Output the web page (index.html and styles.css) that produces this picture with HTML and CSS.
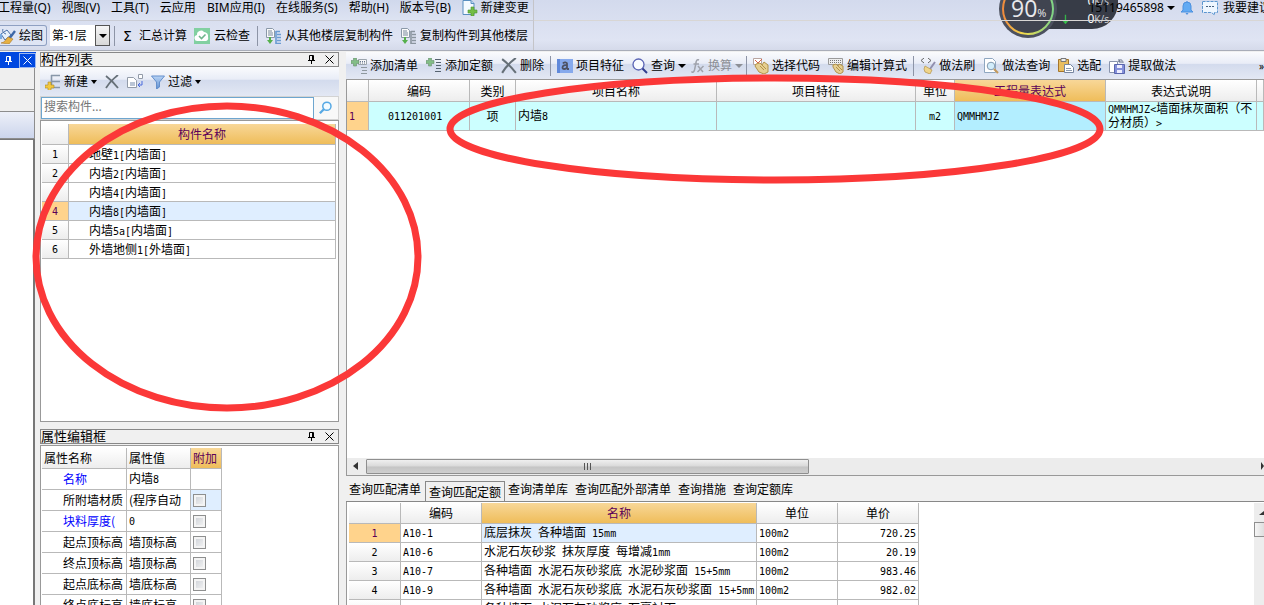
FILE: index.html
```html
<!DOCTYPE html>
<html lang="zh-CN">
<head>
<meta charset="utf-8">
<title>构件做法</title>
<link rel="stylesheet" href="styles.css">
</head>
<body>
<svg class="symbols" aria-hidden="true">
  <defs>
    <linearGradient id="steel" x1="0" y1="0" x2="0" y2="1"><stop offset="0" stop-color="#b9d4f5"/><stop offset="1" stop-color="#5f8fd0"/></linearGradient>
    <linearGradient id="ring" x1="0" y1="0" x2="1" y2="0"><stop offset="0" stop-color="#f08a3c"/><stop offset=".4" stop-color="#f3dc4e"/><stop offset="1" stop-color="#7fd486"/></linearGradient>
    <symbol id="pin" viewBox="0 0 9 9"><path d="M2.500 0.500h4v5M5.500 1v4.500M2.500 0.500v5M1 5.500h7M4.500 6v3" fill="none" stroke="currentColor"/></symbol>
    <symbol id="close" viewBox="0 0 9 9"><path d="M.5.5l8 8M8.500.5l-8 8" fill="none" stroke="currentColor"/></symbol>
    <symbol id="newdoc" viewBox="0 0 16 16"><path d="M1 .5h8l3 3v11H1z" fill="#f5faff" stroke="#5a8fc0"/><path d="M9 .5v3h3" fill="#b8d5ef" stroke="#5a8fc0"/><path d="M9 7h3v3h3v3h-3v3H9v-3H6v-3h3z" fill="#73bd45" stroke="#4c9430" stroke-width=".6"/></symbol>
    <symbol id="paint" viewBox="0 0 16 16"><path d="M1 6l6-4 4 5-6 5z" fill="#e8f1fc" stroke="#4970a8"/><path d="M3 1c-1 2 0 4 3 5" fill="none" stroke="#4970a8"/><path d="M1 6v5" stroke="#7aabe2" stroke-width="2"/><path d="M15 3l-6 8" stroke="#3d67a8" stroke-width="2.400"/><path d="M8 9l-4 5-3 1 8 1 4-5z" fill="#e6b042" stroke="#ad7928" stroke-width=".6"/></symbol>
    <symbol id="cloud" viewBox="0 0 16 16"><path d="M0 0h16v16H0z" fill="#82d0a1"/><path d="M4 13a3 3 0 0 1-1-6 4 4 0 0 1 7-3 4 4 0 0 1 4 5 3 3 0 0 1-2 4z" fill="#fff"/><path d="M5 8l2.500 2.500L11.500 6.500" fill="none" stroke="#6fb58c" stroke-width="1.600"/></symbol>
    <symbol id="floors" viewBox="0 0 16 16"><path d="M1.500.5h6l2 2v7h-8z" fill="#fafafa" stroke="#8a98a8"/><path d="M3 3h4M3 5h5M3 7h5" stroke="#79899d"/><path d="M4 9v3H2l3 4 3-4H6V9z" fill="#55b04b"/><path d="M11 3v13M11 3.500h4M12 6.500h4M12 9.500h4M12 12.500h4M11 15.500h5" stroke="currentColor" fill="none" stroke-width="1.600"/></symbol>
    <symbol id="addnode" viewBox="0 0 16 16"><path d="M6 1.500h9M6 7.500h9M6 13.500h9M6.500 1v12" stroke="#8897a9" stroke-width="1.600" fill="none"/><path d="M3 8h3v3h3v3H6v3H3v-3H0v-3h3z" fill="#f2c840" stroke="#a88727" stroke-width=".6"/></symbol>
    <symbol id="cross" viewBox="0 0 14 14"><path d="M1 1c4 3 8 7 12 12M13 0C9 3 4 8 1 13" fill="none" stroke="#667078" stroke-width="1.800"/></symbol>
    <symbol id="copy" viewBox="0 0 16 16"><path d="M.5 3.500h6l3 3v7h-9z" fill="#fff" stroke="#929ba8"/><path d="M3 8h5v4H3z" fill="#bac5d5"/><path d="M11.500.5h4v4h-4z" fill="#fff" stroke="#929ba8"/><path d="M15 7v4h-4m2-2-2 2 2 2" fill="none" stroke="#4a6bdd"/></symbol>
    <symbol id="funnel" viewBox="0 0 14 14"><path d="M.5 1h13L8.500 7v5L5.500 14V7z" fill="url(#steel)" stroke="#648fcc"/></symbol>
    <symbol id="lens" viewBox="0 0 16 16"><circle cx="9" cy="6" r="4.700" fill="#f3fbff" stroke="currentColor" stroke-width="1.700"/><path d="M5.500 9.500L1 14" stroke="currentColor" stroke-width="2.600"/></symbol>
    <symbol id="lensr" viewBox="0 0 16 16"><circle cx="6.500" cy="6.500" r="5.500" fill="#fafcff" stroke="#5a64b4" stroke-width="1.300"/><path d="M10.500 10.500L15 15" stroke="#303c8e" stroke-width="2"/></symbol>
    <symbol id="addlist" viewBox="0 0 16 16"><path d="M7.500 1.500h8v5h-8z" fill="#f7f7f7" stroke="#9ba4ad"/><path d="M9 3.500h5M9 5h5" stroke="#67778e" stroke-dasharray="1 1"/><path d="M10 9.500h6M11 12.500h5M10 15.500h6" stroke="#8e989e"/><path d="M2.500 0h3v2.500H8v3H5.500V8h-3V5.500H0v-3h2.500z" fill="#82bd86" stroke="#6a8e70" stroke-width=".6"/></symbol>
    <symbol id="addquota" viewBox="0 0 16 16"><path d="M9 1.500h6M10 4.500h5M10 7.500h5M10 10.500h5M9 13.500h6" stroke="#56636f" stroke-width="1.200"/><path d="M2.500 0h3v2.500H8v3H5.500V8h-3V5.500H0v-3h2.500z" fill="#82bd86" stroke="#6a8e70" stroke-width=".6"/></symbol>
    <symbol id="feature" viewBox="0 0 16 14"><path d="M0 0h16v14H0z" fill="#86a9ec"/><path d="M0 0h3v14H0z" fill="#5f88da"/><path d="M6 4.500c1-2 4-1 4 0v5.500M10 6.500c-2-1-4.500 0-4.500 2S9 10.500 10 8.500M10 10h2" fill="none" stroke="#4d5263" stroke-width="1.800"/></symbol>
    <symbol id="fx" viewBox="0 0 14 14"><path d="M8 1C6 0 5 2 5 4L3.500 11c-.5 2-2 3-3 1.500M2.500 5H8M7 7l5 6M12.500 7L6.500 13" fill="none" stroke="#a0a3ac" stroke-width="1.500"/></symbol>
    <symbol id="handcode" viewBox="0 0 16 16"><path d="M.5.5h8v6h-8z" fill="#fff" stroke="#b9a5a0"/><path d="M2 2l3 3 4-4" fill="none" stroke="#d96347"/><path d="M3 6l4-1 2 2 2-3 4 3v7l-4 2-5-2-4-6z" fill="#e5cf92" stroke="#b39349"/><path d="M7 8l4 4M9 7l4 4" stroke="#b39349"/></symbol>
    <symbol id="handcalc" viewBox="0 0 16 16"><path d="M.5.5h14v6H.5z" fill="#eee" stroke="#9a9a9a"/><path d="M2 2.500h11M2 4.500h11" stroke="#777" stroke-dasharray="1 1"/><path d="M5 7l3-1 2 2 1-2 4 2v6l-3 2-4-2-3-5z" fill="#e5cf92" stroke="#b39349"/><path d="M8 9l4 4M10 8l4 4" stroke="#b39349"/></symbol>
    <symbol id="brush" viewBox="0 0 16 16"><path d="M4 0L1 2.500 4 5M8 0l3 2.500L8 5" fill="none" stroke="#666"/><path d="M15 4l-5 7" stroke="#918fae" stroke-width="2"/><path d="M5 8l7 4-2 4-5-2-1-3z" fill="#f0d58a" stroke="#b89a55" stroke-width=".8"/></symbol>
    <symbol id="doclens" viewBox="0 0 16 16"><path d="M1.500.5h8l3 3v11h-11z" fill="#fff" stroke="#8fa7c0"/><circle cx="8" cy="8" r="3.800" fill="#d2edfb" stroke="#8399ae"/><path d="M11 11l4 4" stroke="#c3995d" stroke-width="2.200"/></symbol>
    <symbol id="paste" viewBox="0 0 16 16"><path d="M.5 1.500h10v12H.5z" fill="#e8bd60" stroke="#a6762b"/><path d="M3 .5h5v3H3z" fill="#eee" stroke="#777"/><path d="M6.500 6.500h6l3 3v5h-9z" fill="#fff" stroke="#7786a0"/><path d="M8 10.500h5M8 12.500h6" stroke="#8b9ab0"/></symbol>
    <symbol id="extract" viewBox="0 0 16 16"><path d="M.5 3.500h8v11h-8z" fill="#fff" stroke="#8994ad"/><path d="M5.500 6.500h10v9h-10z" fill="#8490da" stroke="#5965ad"/><path d="M8 7h5v3H8zM8 12h5v3H8z" fill="#eef"/><path d="M14 5c0-4-4-4-4-1m0-3v3h3" fill="none" stroke="#626d88"/></symbol>
    <symbol id="bell" viewBox="0 0 14 14"><path d="M7 0v2M3 9V5a4 4 0 0 1 8 0v4l2 2H1z" fill="#61aaf3" stroke="#4d91df"/><path d="M5.500 12h3L7 14z" fill="#4d91df"/></symbol>
    <symbol id="chat" viewBox="0 0 16 14"><path d="M.5.5h15v11h-3v2.500l-3-2.500h-9z" fill="#eef6ff" stroke="#5b95cf" stroke-dasharray="3 1"/><path d="M4 5.500h2M7 5.500h2M10 5.500h2" stroke="#47607e"/></symbol>
  </defs>
</svg>

<header class="top">
  <nav class="menu" aria-label="主菜单">
    <button>工程量(Q)</button><button>视图(V)</button><button>工具(T)</button><button>云应用</button><button>BIM应用(I)</button><button>在线服务(S)</button><button>帮助(H)</button><button>版本号(B)</button>
    <button class="with-icon"><svg class="i16"><use href="#newdoc"/></svg>新建变更</button>
  </nav>
  <div class="account">
    <button class="with-icon">15119465898<i class="tri"></i></button>
    <svg class="i14"><use href="#bell"/></svg>
    <button class="with-icon"><svg class="i16"><use href="#chat"/></svg>我要建议</button>
  </div>
  <div class="tools">
    <button class="draw"><svg class="i16"><use href="#paint"/></svg>绘图</button>
    <label class="floor"><select aria-label="楼层"><option>第-1层</option></select></label>
    <i class="sep"></i>
    <button class="sum"><span class="sigma">Σ</span>汇总计算</button>
    <button><svg class="i16"><use href="#cloud"/></svg>云检查</button>
    <i class="sep"></i>
    <button><svg class="i16 blue"><use href="#floors"/></svg>从其他楼层复制构件</button>
    <button><svg class="i16 gray"><use href="#floors"/></svg>复制构件到其他楼层</button>
  </div>
</header>

<main class="work">
  <aside class="dock">
    <div class="dock-title"><svg class="i9"><use href="#pin"/></svg><button aria-label="关闭"><svg class="i9"><use href="#close"/></svg></button></div>
    <div class="slot"></div><div class="slot"></div><div class="slot active"></div><div class="dock-body"></div>
  </aside>

  <section class="side">
    <div class="caption"><h2>构件列表</h2><svg class="i9"><use href="#pin"/></svg><button aria-label="关闭"><svg class="i9"><use href="#close"/></svg></button></div>
    <div class="bar side-bar">
      <button><svg class="i16"><use href="#addnode"/></svg>新建<i class="tri small"></i></button>
      <button aria-label="删除"><svg class="i14"><use href="#cross"/></svg></button>
      <button aria-label="复制"><svg class="i16"><use href="#copy"/></svg></button>
      <button><svg class="i14"><use href="#funnel"/></svg>过滤<i class="tri small"></i></button>
    </div>
    <div class="search"><input type="text" aria-label="搜索构件" placeholder="搜索构件..."><button aria-label="搜索"><svg class="i14 sky"><use href="#lens"/></svg></button></div>
    <div class="box list">
      <table class="grid names">
        <colgroup><col class="w27"><col></colgroup>
        <thead><tr><th></th><th class="hot">构件名称</th></tr></thead>
        <tbody>
          <tr><th><b>1</b></th><td>地壁<b>1[</b>内墙面<b>]</b></td></tr>
          <tr><th><b>2</b></th><td>内墙<b>2[</b>内墙面<b>]</b></td></tr>
          <tr><th></th><td>内墙<b>4[</b>内墙面<b>]</b></td></tr>
          <tr class="current"><th><b>4</b></th><td class="sel">内墙<b>8[</b>内墙面<b>]</b></td></tr>
          <tr><th><b>5</b></th><td>内墙<b>5a[</b>内墙面<b>]</b></td></tr>
          <tr><th><b>6</b></th><td>外墙地侧<b>1[</b>外墙面<b>]</b></td></tr>
        </tbody>
      </table>
    </div>
    <div class="caption second"><h2>属性编辑框</h2><svg class="i9"><use href="#pin"/></svg><button aria-label="关闭"><svg class="i9"><use href="#close"/></svg></button></div>
    <div class="box props-box">
      <table class="grid props">
        <colgroup><col class="w85"><col class="w64"><col class="w31"></colgroup>
        <thead><tr><th>属性名称</th><th>属性值</th><th class="hot">附加</th></tr></thead>
        <tbody>
          <tr><td class="key">名称</td><td>内墙<b>8</b></td><td></td></tr>
          <tr><td>所附墙材质</td><td>(程序自动</td><td class="sel"><input type="checkbox" aria-label="附加 所附墙材质"></td></tr>
          <tr><td class="key">块料厚度(</td><td><b>0</b></td><td><input type="checkbox" aria-label="附加 块料厚度"></td></tr>
          <tr><td>起点顶标高</td><td>墙顶标高</td><td><input type="checkbox" aria-label="附加 起点顶标高"></td></tr>
          <tr><td>终点顶标高</td><td>墙顶标高</td><td><input type="checkbox" aria-label="附加 终点顶标高"></td></tr>
          <tr><td>起点底标高</td><td>墙底标高</td><td><input type="checkbox" aria-label="附加 起点底标高"></td></tr>
          <tr><td>终点底标高</td><td>墙底标高</td><td><input type="checkbox" aria-label="附加 终点底标高"></td></tr>
        </tbody>
      </table>
    </div>
  </section>

  <section class="content">
    <div class="bar main-bar">
      <button><svg class="i16"><use href="#addlist"/></svg>添加清单</button>
      <button><svg class="i16"><use href="#addquota"/></svg>添加定额</button>
      <button><svg class="i16"><use href="#cross"/></svg>删除</button>
      <i class="sep"></i>
      <button><svg class="i16"><use href="#feature"/></svg>项目特征</button>
      <button class="drop"><svg class="i16"><use href="#lensr"/></svg>查询<i class="tri"></i></button>
      <button class="drop off" disabled><svg class="i14"><use href="#fx"/></svg>换算<i class="tri"></i></button>
      <i class="sep"></i>
      <button><svg class="i16"><use href="#handcode"/></svg>选择代码</button>
      <button><svg class="i16"><use href="#handcalc"/></svg>编辑计算式</button>
      <i class="sep"></i>
      <button><svg class="i16"><use href="#brush"/></svg>做法刷</button>
      <button><svg class="i16"><use href="#doclens"/></svg>做法查询</button>
      <button><svg class="i16"><use href="#paste"/></svg>选配</button>
      <button><svg class="i16"><use href="#extract"/></svg>提取做法</button>
      <span class="more">»</span>
    </div>
    <div class="upper">
      <table class="grid items">
        <colgroup><col class="w22"><col class="w101"><col class="w46"><col class="w201"><col class="w199"><col class="w39"><col class="w151"><col class="w151"><col></colgroup>
        <thead><tr><th></th><th>编码</th><th>类别</th><th>项目名称</th><th>项目特征</th><th>单位</th><th class="hot">工程量表达式</th><th>表达式说明</th><th></th></tr></thead>
        <tbody><tr class="current"><th><b>1</b></th><td class="code"><b>011201001</b></td><td class="mid">项</td><td>内墙<b>8</b></td><td></td><td class="mid"><b>m2</b></td><td class="cell"><b>QMMHMJZ</b></td><td class="wrap"><b>QMMHMJZ&lt;</b>墙面抹灰面积（不分材质）<b>&gt;</b></td><td></td></tr></tbody>
      </table>
      <div class="hscroll"><i class="arrow"></i><div class="thumb"><i></i><i></i><i></i></div><i class="arrow right"></i></div>
    </div>
    <div class="tabs" role="tablist">
      <button role="tab">查询匹配清单</button><button role="tab" class="on" aria-selected="true">查询匹配定额</button><button role="tab">查询清单库</button><button role="tab">查询匹配外部清单</button><button role="tab">查询措施</button><button role="tab">查询定额库</button>
    </div>
    <div class="lower">
      <table class="grid quota">
        <colgroup><col class="w52"><col class="w81"><col class="w275"><col class="w81"><col class="w81"></colgroup>
        <thead><tr><th></th><th>编码</th><th class="hot">名称</th><th>单位</th><th>单价</th></tr></thead>
        <tbody>
          <tr class="current"><th><b>1</b></th><td><b>A10-1</b></td><td class="sel">底层抹灰<b> </b>各种墙面<b> 15mm</b></td><td><b>100m2</b></td><td class="num"><b>720.25</b></td></tr>
          <tr><th><b>2</b></th><td><b>A10-6</b></td><td>水泥石灰砂浆<b> </b>抹灰厚度<b> </b>每增减<b>1mm</b></td><td><b>100m2</b></td><td class="num"><b>20.19</b></td></tr>
          <tr><th><b>3</b></th><td><b>A10-7</b></td><td>各种墙面<b> </b>水泥石灰砂浆底<b> </b>水泥砂浆面<b> 15+5mm</b></td><td><b>100m2</b></td><td class="num"><b>983.46</b></td></tr>
          <tr><th><b>4</b></th><td><b>A10-9</b></td><td>各种墙面<b> </b>水泥石灰砂浆底<b> </b>水泥石灰砂浆面<b> 15+5mm</b></td><td><b>100m2</b></td><td class="num"><b>982.02</b></td></tr>
          <tr><th></th><td></td><td>各种墙面<b> </b>水泥石灰砂浆底<b> </b>石膏衬面</td><td></td><td></td></tr>
        </tbody>
      </table>
      <div class="vscroll"><i class="arrow up"></i><div class="knob"></div></div>
    </div>
  </section>
</main>

<div class="meter">
  <div class="pill"><span class="rate"><em>0</em>K/s</span><span class="rate"><i>↓</i><em>0</em>K/s</span></div>
  <svg class="dial" viewBox="0 0 60 60"><circle cx="30" cy="30" r="29" fill="#4c515f"/><circle cx="30" cy="30" r="25" fill="#404450" stroke="url(#ring)" stroke-width="2"/></svg>
  <p class="percent">90<small>%</small></p>
</div>
<svg class="marks" aria-hidden="true"><ellipse cx="227" cy="257" rx="191" ry="151"/><ellipse cx="775" cy="129" rx="325" ry="51"/></svg>
</body>
</html>
```

FILE: styles.css
```css
* { box-sizing: border-box; }
body {
  margin: 0;
  height: 100vh;
  display: flex;
  flex-direction: column;
  overflow: hidden;
  background: #f0f0f0;
  color: #000;
  font: 12px/16px "Noto Sans", "Noto Sans CJK SC", sans-serif;
}
button {
  display: flex;
  align-items: center;
  gap: 3px;
  margin: 0;
  padding: 0;
  border: 0;
  background: none;
  color: inherit;
  font: inherit;
  white-space: nowrap;
}
svg { display: block; flex: none; }
i { font-style: normal; }
.symbols { position: absolute; width: 0; height: 0; }
.i16 { width: 16px; height: 16px; }
.i14 { width: 14px; height: 14px; }
.i9 { width: 9px; height: 9px; }
.blue { color: #6a9bd2; }
.gray { color: #8a949e; }
.sky { color: #55a8e4; }
.tri {
  border: 4px solid transparent;
  border-top-color: currentColor;
  border-bottom: 0;
}
.tri.small { border-width: 4px 3px 0; }
.sep { width: 1px; height: 20px; background: #8d94a6; }

/* window header */
.top {
  flex: none;
  height: 51px;
  display: grid;
  grid-template: 21px 29px / auto 1fr;
  background: linear-gradient(#d3daed, #dfe4f3 80%, #d5daea);
  border-bottom: 1px solid #a9adb8;
}
.menu {
  display: flex;
  gap: 11px;
  padding: 0 4px 5px 0;
  margin-left: -2px;
  border-right: 1px solid #c4c4c8;
  border-bottom: 1px solid #c9cbd4;
  background: linear-gradient(#d0d8ec, #dde3f2);
}
.account {
  position: relative;
  z-index: 1;
  display: flex;
  justify-content: flex-end;
  align-items: center;
  gap: 5px;
  margin-right: -7px;
  padding-bottom: 5px;
  border-bottom: 1px solid #d8d6d4;
}
.account .with-icon:last-child { gap: 5px; margin-left: 3px; }
.tools {
  grid-row: 2;
  display: flex;
  align-items: center;
  gap: 7px;
  padding-right: 5px;
  border-right: 1px solid #c4c4c8;
}
.tools button { gap: 4px; }
.tools .draw {
  gap: 3px;
  height: 21px;
  margin-right: -4px;
  padding-right: 3px;
  border: 1px solid #8fa0c2;
  border-left: 0;
  border-radius: 0 3px 3px 0;
  background: #dfe5f4;
}
.floor {
  position: relative;
  width: 60px;
  height: 21px;
  margin-right: -3px;
  background: #fff;
}
.floor select {
  width: 100%;
  height: 100%;
  padding: 0 2px;
  border: 0;
  appearance: none;
  background: none;
  font: inherit;
}
.floor::before {
  content: "";
  position: absolute;
  inset: 0 0 0 auto;
  width: 13px;
  border: 1px solid #555;
  background: linear-gradient(#f6f6f6, #d8d8d8);
}
.floor::after {
  content: "";
  position: absolute;
  right: 3px;
  top: 9px;
  border: 4px solid transparent;
  border-top-color: #000;
  border-width: 4px 4px 0;
}
.tools .sum { gap: 7px; padding-left: 1px; }
.sigma { font: 14px/16px "DejaVu Sans", sans-serif; }

/* work area */
.work {
  flex: 1;
  min-height: 0;
  display: grid;
  grid-template-columns: 36px 299px minmax(0, 1fr);
  column-gap: 4px;
  padding-top: 1px;
}
.dock { display: flex; flex-direction: column; }
.dock-title {
  display: flex;
  align-items: center;
  justify-content: flex-end;
  gap: 6px;
  height: 16px;
  background: #0048e0;
  color: #fff;
}
.dock-title button { padding: 2px 3px; border: 1px solid #9db8ef; }
.slot { height: 22px; margin-right: 1px; border: 1px solid #8d8d8d; border-width: 0 1px 1px 0; background: #efefef; }
.slot.active { height: 27px; background: linear-gradient(#edf0f9, #ccd5ec); }
.dock-body { flex: 1; margin-right: 1px; border: 1px solid #777; border-width: 1px 2px 0 0; background: #fff; }

.side { display: flex; flex-direction: column; min-height: 0; }
.caption {
  flex: none;
  display: flex;
  align-items: center;
  gap: 9px;
  height: 15px;
  padding-right: 4px;
  border: 1px solid #888;
}
.caption h2 { flex: 1; margin: 0; font: inherit; font-size: 13px; line-height: 13px; }
.caption.second { margin: 7px 0 1px; }
.bar {
  flex: none;
  display: flex;
  align-items: center;
  background: linear-gradient(#fafbfd, #e9edf7 42%, #d3dbed 46%, #e3e8f4);
}
.side-bar { height: 29px; gap: 8px; padding: 0 5px; }
.search {
  flex: none;
  display: flex;
  height: 24px;
  border: 1px solid #d3d3d3;
}
.search input {
  flex: 1;
  min-width: 0;
  padding: 0 2px 3px;
  border: 1px solid #6ea6cf;
  background: #fff;
  font: inherit;
}
.search input::placeholder { color: #767676; }
.search button { width: 24px; justify-content: center; background: #f8f8f8; }
.box { border: 1px solid #999; background: #fff; overflow: hidden; }
.list { flex: none; height: 302px; padding: 3px 2px 0 1px; }
.props-box { flex: 1; min-height: 0; padding: 2px 1px 0; border-bottom: 0; }

/* grids */
.grid {
  width: 100%;
  table-layout: fixed;
  border-collapse: separate;
  border-spacing: 0;
  line-height: 14px;
  font-family: "Noto Sans CJK SC", sans-serif;
}
.grid th, .grid td {
  height: 19px;
  padding: 0 2px;
  border: 1px solid #b9b9b9;
  border-width: 0 1px 1px 0;
  font-weight: normal;
  text-align: left;
  white-space: nowrap;
  overflow: hidden;
}
.grid th { text-align: center; background: linear-gradient(#fff, #ededed); }
.grid thead th { height: 21px; }
.grid b { font: 10px/14px "DejaVu Sans Mono", monospace; white-space: pre; }
.grid .hot { background: linear-gradient(#f8d798, #efbd5a); color: #5b0058; }
.grid .current > th { background: #ffd38c; color: #5b0058; }
.grid .sel { background: #dfeeff; }
.grid .mid { text-align: center; }
.grid .num { text-align: right; }
.names td { padding: 1px 0 0 20px; }
.grid.names td { padding-left: 20px; }
.props { width: 180px; }
.grid.props th, .grid.props td { height: 21px; }
.grid.props th { text-align: left; }
.grid.props tbody td:first-child { padding-left: 21px; padding-right: 0; }
.props .key { color: #00f; }
.props input {
  display: block;
  appearance: none;
  width: 13px;
  height: 13px;
  margin: 0;
  border: 1px solid #8e8f8f;
  background: linear-gradient(135deg, #cbcfd5, #f6f6f6);
  box-shadow: inset 0 0 0 2px #f4f4f4;
}
.w22 { width: 22px; } .w27 { width: 27px; } .w31 { width: 31px; } .w39 { width: 39px; }
.w46 { width: 46px; } .w52 { width: 52px; } .w64 { width: 64px; } .w81 { width: 81px; }
.w85 { width: 85px; } .w101 { width: 101px; } .w151 { width: 151px; } .w199 { width: 199px; }
.w201 { width: 201px; } .w275 { width: 275px; }

/* right side */
.content { display: flex; flex-direction: column; min-width: 0; min-height: 0; padding-left: 3px; }
.main-bar { height: 27px; gap: 8px; padding-left: 5px; }
.main-bar .sep { margin: 0 -2px; }
.main-bar .drop { margin-right: -3px; }
.off { color: #8c8f96; }
.more { margin-left: auto; font-size: 10px; }
.upper {
  flex: none;
  display: flex;
  flex-direction: column;
  justify-content: space-between;
  height: 397px;
  border: 1px solid #999;
  border-width: 1px 0 1px 1px;
  background: #fff;
}
.grid.items thead th { height: 22px; }
.grid.items tbody th { height: 29px; text-align: left; }
.grid.items tbody td { height: 29px; background: #ccffff; }
.grid.items .code { padding-left: 19px; }
.grid.items tbody .cell { background: #b3eeff; }
.grid.items .wrap { white-space: normal; line-height: 12px; padding-right: 0; }
.grid.items .wrap b { line-height: 12px; }
.hscroll { display: flex; align-items: center; height: 17px; padding: 0 0 1px 6px; background: #ececec; }
.arrow { border: 4px solid transparent; border-width: 4px 5px 4px 0; border-right-color: #333; }
.arrow.right { margin-left: auto; border-width: 4px 0 4px 3px; border-left-color: #333; }
.thumb {
  display: flex;
  justify-content: center;
  align-items: center;
  gap: 2px;
  width: 443px;
  height: 15px;
  margin-left: 8px;
  border: 1px solid #8f8f8f;
  border-radius: 1px;
  background: linear-gradient(#efefef, #d9d9d9 48%, #c4c4c4 52%, #cfcfcf);
}
.thumb i { width: 1px; height: 7px; background: #555; }
.tabs {
  flex: none;
  display: flex;
  height: 26px;
  padding: 3px 3px 0;
  border-bottom: 1px solid #888;
  font-family: "Noto Sans CJK SC", sans-serif;
}
.tabs button { padding: 0 7px 3px 0; }
.tabs .on { margin: 2px 3px 0 -3px; padding: 0 3px; border: 1px solid #888; border-bottom: 0; }
.lower {
  flex: 1;
  min-height: 0;
  display: flex;
  justify-content: space-between;
  padding: 1px 0 0 2px;
  border-left: 1px solid #999;
  background: #fff;
  overflow: hidden;
}
.quota { flex: none; width: 570px; align-self: flex-start; }
.vscroll { width: 10px; padding-top: 8px; background: #ededed; overflow: hidden; }
.arrow.up { display: block; width: 0; margin-left: 5px; border-width: 0 5px 4px; border-color: transparent transparent #333; }
.knob { width: 17px; height: 15px; margin-top: 7px; border: 1px solid #8f8f8f; background: linear-gradient(90deg, #f5f5f5, #d0d0d0); }

/* floating speed meter */
.meter { position: absolute; left: 998px; top: -21px; width: 120px; height: 60px; color: #fff; }
.pill {
  position: absolute;
  inset: 0 0 10px 30px;
  display: flex;
  flex-direction: column;
  justify-content: flex-end;
  padding: 0 9px 1px;
  border-radius: 0 0 26px 0;
  background: rgba(43, 47, 58, .93);
}
.rate { display: flex; justify-content: flex-end; line-height: 18px; font-size: 10px; color: #c6c8cd; }
.rate em { font-size: 12px; font-style: normal; color: #fff; }
.rate i { margin-right: 17px; color: #35c94a; font-weight: bold; }
.dial { position: absolute; left: 0; top: 0; width: 60px; height: 60px; }
.percent { position: absolute; left: 13px; top: 15px; margin: 0; font: 23px/28px "Open Sans", sans-serif; color: #e8e9ec; }
.percent small { font-size: 11px; }
.marks { position: absolute; z-index: 2; inset: 0; width: 100%; height: 100%; pointer-events: none; fill: none; stroke: #fb3838; stroke-width: 7px; }
```
